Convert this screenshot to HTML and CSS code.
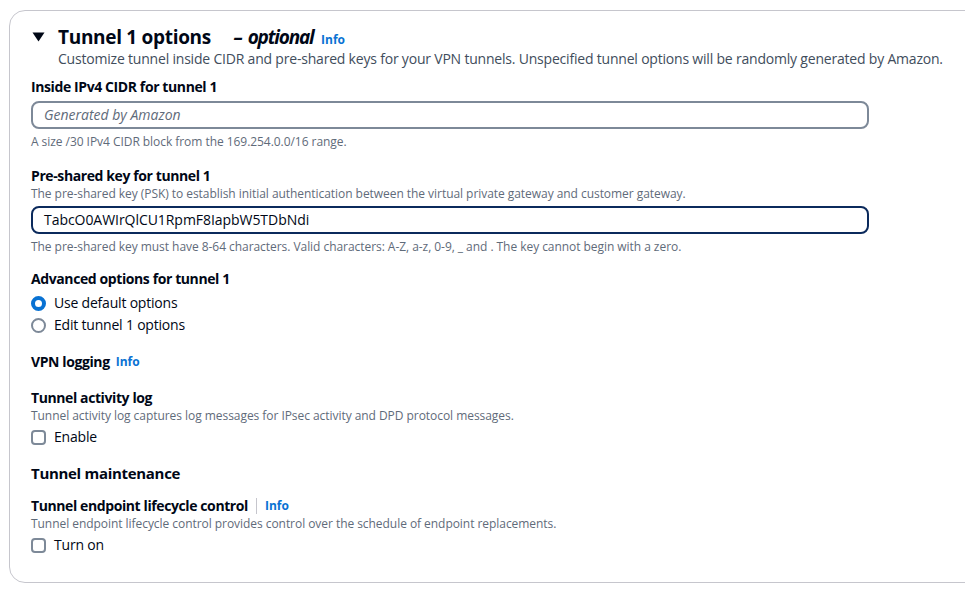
FILE: index.html
```html
<!DOCTYPE html>
<html lang="en">
<head>
<meta charset="utf-8">
<title>Tunnel 1 options</title>
<link rel="stylesheet" href="styles.css">
</head>
<body>
<section class="card">
  <header class="head">
    <span class="caret"><svg width="13" height="10" viewBox="0 0 13 10"><path d="M0.5 0.5 H12.5 L6.5 9.5 Z" fill="#000716"/></svg></span>
    <div class="head-text">
      <h2 class="title">Tunnel 1 options <span class="opt">– <span class="opt-word">optional</span></span> <a class="info info-title">Info</a></h2>
      <p class="head-desc">Customize tunnel inside CIDR and pre-shared keys for your VPN tunnels. Unspecified tunnel options will be randomly generated by Amazon.</p>
    </div>
  </header>

  <div class="field f-first">
    <div class="label">Inside IPv4 CIDR for tunnel 1</div>
    <div class="input"><span class="placeholder">Generated by Amazon</span></div>
    <div class="constraint">A size /30 IPv4 CIDR block from the 169.254.0.0/16 range.</div>
  </div>

  <div class="field">
    <div class="label">Pre-shared key for tunnel 1</div>
    <div class="desc">The pre-shared key (PSK) to establish initial authentication between the virtual private gateway and customer gateway.</div>
    <div class="input focused"><span class="value">TabcO0AWIrQlCU1RpmF8IapbW5TDbNdi</span></div>
    <div class="constraint">The pre-shared key must have 8-64 characters. Valid characters: A-Z, a-z, 0-9, _ and . The key cannot begin with a zero.</div>
  </div>

  <div class="field f-radio">
    <div class="label">Advanced options for tunnel 1</div>
    <div class="radios">
      <div class="choice"><span class="radio checked"></span><span>Use default options</span></div>
      <div class="choice"><span class="radio"></span><span>Edit tunnel 1 options</span></div>
    </div>
  </div>

  <div class="field f-vpn">
    <div class="label">VPN logging <a class="info">Info</a></div>
  </div>

  <div class="field">
    <div class="label">Tunnel activity log</div>
    <div class="desc">Tunnel activity log captures log messages for IPsec activity and DPD protocol messages.</div>
    <div class="choice check-row"><span class="checkbox"></span><span>Enable</span></div>
  </div>

  <h3 class="subhead">Tunnel maintenance</h3>

  <div class="field f-tight">
    <div class="label">Tunnel endpoint lifecycle control <span class="divider"></span><a class="info">Info</a></div>
    <div class="desc">Tunnel endpoint lifecycle control provides control over the schedule of endpoint replacements.</div>
    <div class="choice check-row"><span class="checkbox"></span><span>Turn on</span></div>
  </div>
</section>
</body>
</html>
```

FILE: styles.css
```css
html, body {
  margin: 0;
  padding: 0;
  background: #ffffff;
  overflow: hidden;
}
body {
  font-family: "Open Sans", "Noto Sans", sans-serif;
  color: #000716;
  font-size: 14px;
  line-height: 20px;
  letter-spacing: -0.2px;
}
.card {
  margin: 10px 0 0 9px;
  width: 1000px;
  height: 573px;
  box-sizing: border-box;
  border: 1px solid #c6c6cd;
  border-radius: 16px;
  padding: 15px 20px 20px 21px;
}
.head {
  display: flex;
  align-items: flex-start;
}
.caret {
  width: 26px;
  flex: none;
  padding-top: 6px;
  padding-left: 1px;
  line-height: 0;
}
.title {
  margin: 0;
  font-size: 19px;
  line-height: 22px;
  height: 23px;
  font-weight: 700;
  letter-spacing: -0.3px;
}
.opt {
  font-style: italic;
  font-weight: 700;
  letter-spacing: 0;
  margin-left: 18px;
}
.opt-word {
  letter-spacing: -1.2px;
}
.info {
  color: #0972d3;
  font-size: 12px;
  font-weight: 700;
  letter-spacing: 0;
  margin-left: 6px;
  cursor: pointer;
}
.info-title {
  margin-left: 3px;
  line-height: 12px;
  font-style: normal;
}
.head-desc {
  margin: 0;
  color: #414d5c;
  font-size: 14px;
  line-height: 20px;
}
.field {
  margin-top: 16px;
}
.f-first {
  margin-top: 8px;
}
.f-radio {
  margin-top: 14px;
}
.f-vpn {
  margin-top: 17px;
}
.label {
  font-weight: 700;
  font-size: 14px;
  line-height: 20px;
  letter-spacing: -0.4px;
  display: flex;
  align-items: center;
}
.desc, .constraint {
  color: #5f6b7a;
  font-size: 12px;
  line-height: 16px;
  letter-spacing: -0.05px;
}
.input {
  margin-top: 4px;
  width: 838px;
  height: 28px;
  box-sizing: border-box;
  border: 2px solid #7d8998;
  border-radius: 8px;
  padding: 0 11px;
  display: flex;
  align-items: center;
  letter-spacing: 0;
}
.desc + .input {
  margin-top: 4px;
}
.input.focused {
  border-color: #0b2a5c;
}
.placeholder {
  color: #5f6b7a;
  font-style: italic;
}
.value {
  color: #000716;
  letter-spacing: -0.05px;
}
.constraint {
  margin-top: 5px;
}
.radios {
  margin-top: 4px;
  display: flex;
  flex-direction: column;
  gap: 2px;
}
.choice {
  display: flex;
  align-items: center;
  gap: 8px;
  line-height: 20px;
}
.check-row {
  margin-top: 3px;
}
.radio {
  width: 15px;
  height: 15px;
  box-sizing: border-box;
  border: 2px solid #7d8998;
  border-radius: 50%;
  flex: none;
}
.radio.checked {
  border: 4.5px solid #0972d3;
  background: #ffffff;
}
.checkbox {
  width: 15px;
  height: 15px;
  box-sizing: border-box;
  border: 2px solid #7d8998;
  border-radius: 4px;
  flex: none;
}
.subhead {
  margin: 16px 0 0;
  font-size: 15px;
  line-height: 20px;
  font-weight: 700;
  letter-spacing: -0.3px;
}
.f-tight {
  margin-top: 13px;
}
.divider {
  display: inline-block;
  width: 1px;
  height: 16px;
  background: #c6c6cd;
  margin-left: 8px;
  margin-right: 2px;
}
```
